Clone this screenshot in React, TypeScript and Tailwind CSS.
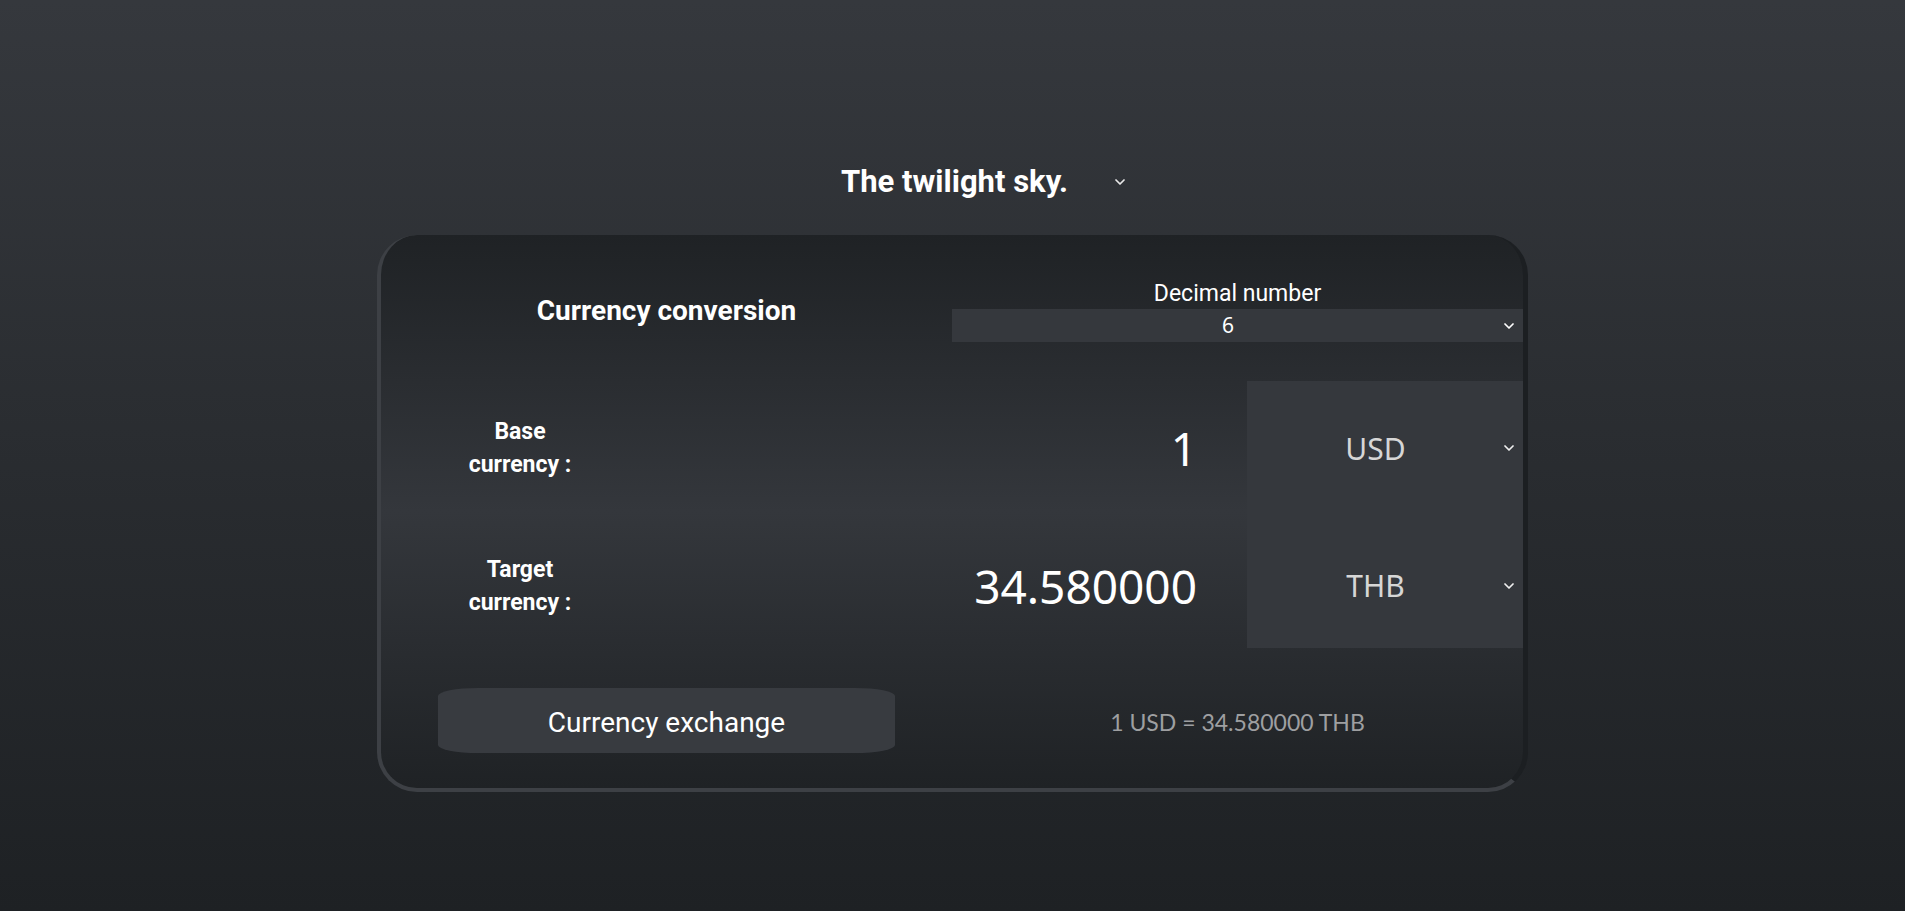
import React from 'react'

function Chevron({ className = '' }: { className?: string }) {
  return (
    <svg width="10" height="6" viewBox="0 0 10 6" className={className} fill="none">
      <polyline points="1,1 5,5 9,1" stroke="currentColor" strokeWidth="1.7" strokeLinecap="round" strokeLinejoin="round" />
    </svg>
  )
}

function CurrencyRow({ label, value, code, h, shift }: { label: string[]; value: string; code: string; h: string; shift: string }) {
  return (
    <div className={`flex items-center ${h}`}>
      <div className={`w-[278px] text-center font-['Roboto',sans-serif] text-[23px] font-bold leading-[33px] text-white ${shift}`}>
        {label[0]}
        <br />
        {label[1]}
      </div>
      <div className={`flex-1 pr-[50px] text-right font-['Noto_Sans',sans-serif] text-[46px] leading-none text-white ${shift}`}>
        {value}
      </div>
      <div className="flex h-full w-[276px] items-center bg-[#35383d] pr-[9px] text-[#f0f0f0]">
        <div className={`flex flex-1 items-center ${shift}`}>
          <span className="flex-1 text-center font-['Noto_Sans',sans-serif] text-[30px] text-[#d6d6d6]">{code}</span>
          <Chevron />
        </div>
      </div>
    </div>
  )
}

export default function App() {
  return (
    <div className="flex min-h-screen flex-col items-center bg-linear-to-b from-[#35383d] to-[#1e2124] pt-[160px]">
      {/* theme picker */}
      <div className="flex h-[44px] w-[345px] items-center text-white">
        <span className="w-[14px]" />
        <span className="flex-1 text-center font-['Roboto',sans-serif] text-[31px] font-bold">The twilight sky.</span>
        <Chevron className="text-[#e8e8e8]" />
      </div>

      <div className="mt-[31px] h-[557px] w-[1151px] rounded-[40px] border-r-[5px] border-b-4 border-l-4 border-r-[#1c1f22] border-b-[#3d4045] border-l-[#3d4045] bg-linear-to-b from-[#1f2225] via-[#34373c] to-[#1f2225] pt-[45px]">
        <div className="grid h-[62px] grid-cols-2">
          <div className="flex items-center justify-center font-['Roboto',sans-serif] text-[28px] font-bold text-white">
            Currency conversion
          </div>
          <div className="flex flex-col">
            <div className="mt-[1px] h-[25px] text-center font-['Roboto',sans-serif] text-[23px] leading-[26px] text-white">
              Decimal number
            </div>
            <div className="mt-[3px] flex h-[33px] items-center bg-[#35383d] pr-[9px] text-white">
              <span className="flex-1 text-center font-['Noto_Sans',sans-serif] text-[21px]">6</span>
              <Chevron />
            </div>
          </div>
        </div>

        <div className="mt-[39px]">
          <CurrencyRow label={['Base', 'currency :']} value="1" code="USD" h="h-[134px]" shift="" />
          <CurrencyRow label={['Target', 'currency :']} value="34.580000" code="THB" h="h-[133px]" shift="mt-[8px]" />
        </div>

        <div className="mt-[40px] grid grid-cols-2">
          <div className="flex justify-center">
            <button className="h-[65px] w-[457px] rounded-[40px/8px] bg-[#383b40] pt-[4px] font-['Roboto',sans-serif] text-[28px] text-white">
              Currency exchange
            </button>
          </div>
          <div className="flex items-center justify-center pt-[4px] font-['Lato',sans-serif] text-[23px] text-[#9e9fa1]">
            1 USD = 34.580000 THB
          </div>
        </div>
      </div>
    </div>
  )
}
